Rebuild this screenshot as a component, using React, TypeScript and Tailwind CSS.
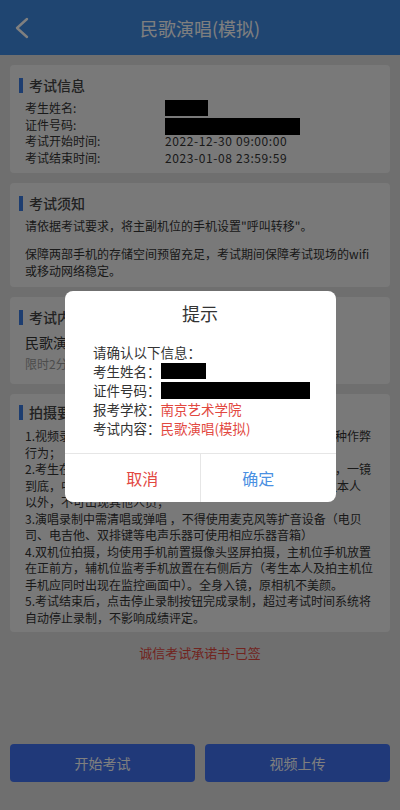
import React from "react";

function CardTitle({ children }: { children: React.ReactNode }) {
  return (
    <div className="-ml-[6px] flex h-[20px] items-center gap-[6px]">
      <span className="block h-[15px] w-[4px] bg-[#3a7be0]" />
      <span className="text-[14px] font-medium leading-[20px] text-[#444]">{children}</span>
    </div>
  );
}

function Row({ label, children }: { label: string; children: React.ReactNode }) {
  return (
    <div className="flex h-[16.5px] items-center text-[12px] leading-[16.5px] text-[#333]">
      <span className="w-[140px] shrink-0">{label}</span>
      {children}
    </div>
  );
}

export default function App() {
  return (
    <div className="relative flex min-h-[810px] w-[400px] flex-col overflow-hidden bg-[#dfdfdf] font-['Noto_Sans_CJK_SC',sans-serif]">
      {/* header */}
      <div className="flex h-[55px] items-center bg-[#3e8ae2]">
        <div className="flex w-[50px] items-center pl-[14px]">
          <svg width="16" height="22" viewBox="0 0 16 22" fill="none">
            <polyline points="13,2 3,11 13,20" stroke="#ffffff" strokeWidth="2.4" strokeLinecap="round" strokeLinejoin="round" />
          </svg>
        </div>
        <div className="flex-1 text-center text-[18px] leading-[24px] text-white">民歌演唱(模拟)</div>
        <div className="w-[50px]" />
      </div>

      <div className="flex flex-col gap-[10px] px-[10px] pt-[10px]">
        {/* card 1 */}
        <div className="rounded-[4px] bg-[#f3f3f3] px-[15px] pb-[7px] pt-[10px]">
          <CardTitle>考试信息</CardTitle>
          <div className="mt-[5px]">
            <Row label="考生姓名:">
              <span className="block h-[16px] w-[43px] bg-black" />
            </Row>
            <Row label="证件号码:">
              <span className="mt-[3px] block h-[17px] w-[135px] bg-black" />
            </Row>
            <Row label="考试开始时间:">
              <span className="tracking-[0.6px]">2022-12-30 09:00:00</span>
            </Row>
            <Row label="考试结束时间:">
              <span className="tracking-[0.6px]">2023-01-08 23:59:59</span>
            </Row>
          </div>
        </div>

        {/* card 2 */}
        <div className="rounded-[4px] bg-[#f3f3f3] px-[15px] pb-[8px] pt-[10px]">
          <CardTitle>考试须知</CardTitle>
          <p className="mt-[5px] text-[12px] leading-[16.5px] text-[#333]">
            请依据考试要求，将主副机位的手机设置"呼叫转移"。
          </p>
          <p className="mt-[11.5px] text-[12px] leading-[16.5px] text-[#333]">
            保障两部手机的存储空间预留充足，考试期间保障考试现场的wifi
            <br />
            或移动网络稳定。
          </p>
        </div>

        {/* card 3 */}
        <div className="rounded-[4px] bg-[#f3f3f3] px-[15px] pb-[12px] pt-[10px]">
          <CardTitle>考试内容</CardTitle>
          <div className="mt-[5px] text-[14px] leading-[20px] text-[#333]">民歌演唱(模拟)</div>
          <div className="mt-[3px] text-[12px] leading-[17px] text-[#999]">限时2分钟</div>
        </div>

        {/* card 4 */}
        <div className="rounded-[4px] bg-[#f3f3f3] px-[15px] pb-[6px] pt-[8px]">
          <CardTitle>拍摄要求</CardTitle>
          <div className="mt-[6px] whitespace-nowrap text-[12px] leading-[16.5px] text-[#333]">
            <p>
              1.视频录制过程中须一次性完成，不得出现剪辑、拼接等各种作弊
              <br />
              行为；
            </p>
            <p>
              2.考生在录制过程中须始终保持正面面对摄像头，全程露脸，一镜
              <br />
              到底，中途不得离开拍摄画面，不得中断更换场地，除考生本人
              <br />
              以外，不可出现其他人员；
            </p>
            <p>
              3.演唱录制中需清唱或弹唱 ，不得使用麦克风等扩音设备（电贝
              <br />
              司、电吉他、双排键等电声乐器可使用相应乐器音箱）
            </p>
            <p>
              4.双机位拍摄，均使用手机前置摄像头竖屏拍摄，主机位手机放置
              <br />
              在正前方，辅机位监考手机放置在右侧后方（考生本人及拍主机位
              <br />
              手机应同时出现在监控画面中）。全身入镜，原相机不美颜。
            </p>
            <p>
              5.考试结束后，点击停止录制按钮完成录制，超过考试时间系统将
              <br />
              自动停止录制，不影响成绩评定。
            </p>
          </div>
        </div>
      </div>

      <div className="mt-[11px] text-center text-[13px] leading-[20px] text-[#e2483f]">诚信考试承诺书-已签</div>

      <div className="flex-1" />

      <div className="grid grid-cols-2 gap-[10px] px-[10px] pb-[28px]">
        <button className="h-[38px] rounded-[4px] bg-[#4172f2] text-[14px] text-white">开始考试</button>
        <button className="h-[38px] rounded-[4px] bg-[#4172f2] text-[14px] text-white">视频上传</button>
      </div>

      {/* overlay + dialog */}
      <div className="absolute inset-0 flex justify-center bg-black/50 pt-[291px]">
        <div className="h-fit w-[271px] overflow-hidden rounded-[8px] bg-white">
          <div className="pt-[10px] text-center text-[18px] leading-[24px] text-[#333]">提示</div>
          <div className="mt-[17.5px] pb-[15.5px] pl-[28.5px] text-[13.5px] leading-[19px] text-[#333]">
            <div>请确认以下信息：</div>
            <div className="flex h-[19px] items-center">
              <span>考生姓名：</span>
              <span className="block h-[16px] w-[45px] bg-black" />
            </div>
            <div className="flex h-[19px] items-center">
              <span>证件号码：</span>
              <span className="block h-[17px] w-[149px] bg-black" />
            </div>
            <div className="flex h-[19px] items-center">
              <span>报考学校：</span>
              <span className="text-[#e2483f]">南京艺术学院</span>
            </div>
            <div className="flex h-[19px] items-center">
              <span>考试内容：</span>
              <span className="text-[#e2483f]">民歌演唱(模拟)</span>
            </div>
          </div>
          <div className="grid h-[49px] grid-cols-2 border-t border-[#e6e6e6]">
            <button className="pb-[1px] pl-[20px] text-[16px] text-[#e2483f]">取消</button>
            <button className="border-l border-[#e6e6e6] pb-[1px] pr-[20px] text-[16px] text-[#4a90e2]">确定</button>
          </div>
        </div>
      </div>
    </div>
  );
}
